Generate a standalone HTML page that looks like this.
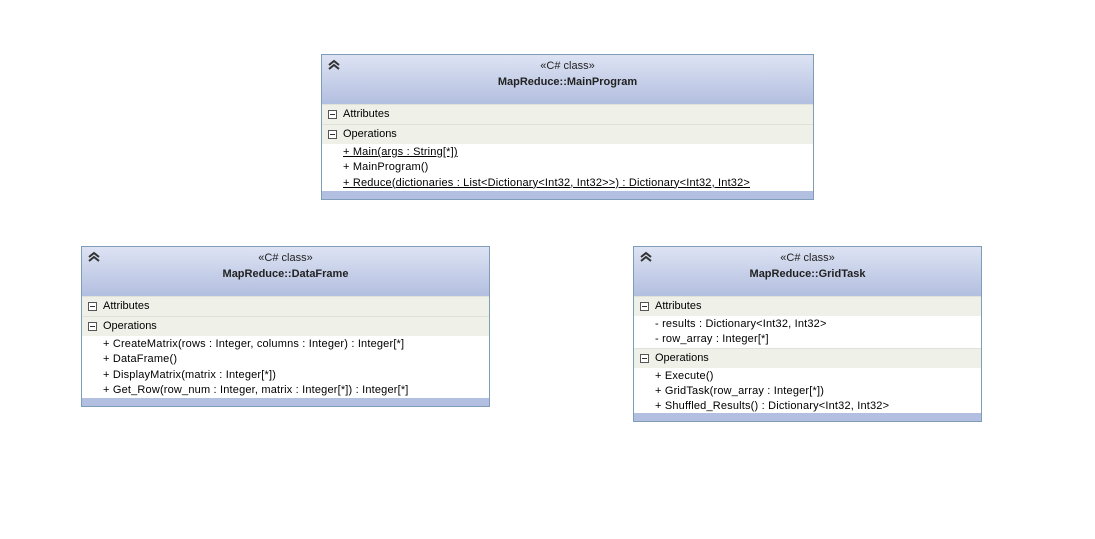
<!DOCTYPE html>
<html><head><style>
body{margin:0;width:1095px;height:539px;background:#fff;position:relative;font-family:"Liberation Sans",Tahoma,sans-serif;font-size:11px;color:#000;overflow:hidden}
.box{position:absolute;border:1px solid #7f9db9;background:#fff;box-sizing:border-box}
.hd{height:49px;background:linear-gradient(#dde3f3,#b3bfe0);position:relative;text-align:center}
.st{padding-top:4px;line-height:14px;color:#222}
.nm{font-weight:bold;line-height:14px;margin-top:2px;color:#222}
.chev{position:absolute;left:5px;top:4px}
.sec{height:19px;line-height:18px;background:#eff1e9;border-top:1px solid #dfe2d6;padding-left:21px;position:relative}
.sec:before{content:"";position:absolute;left:6px;top:5px;width:7px;height:7px;border:1px solid #555;background:#fff}
.sec:after{content:"";position:absolute;left:8px;top:9px;width:5px;height:1px;background:#333}
.items{padding:1px 0 0 21px;letter-spacing:0.18px}
.it{height:15.3px;line-height:15px;white-space:nowrap}
.u{text-decoration:underline}
.ft{height:8px;background:#b3bfe0;position:absolute;left:0;right:0;bottom:0}
</style></head><body>

<div class="box" style="left:321px;top:54px;width:493px;height:146px">
<div class="hd"><svg class="chev" width="14" height="12" viewBox="0 0 14 12"><path d="M2 6L7 2L12 6M2 10L7 6L12 10" fill="none" stroke="#333" stroke-width="2"/></svg><div class="st">«C# class»</div><div class="nm">MapReduce::MainProgram</div></div>
<div class="sec">Attributes</div>
<div class="sec">Operations</div>
<div class="items">
<div class="it u">+ Main(args : String[*])</div>
<div class="it">+ MainProgram()</div>
<div class="it u">+ Reduce(dictionaries : List&lt;Dictionary&lt;Int32, Int32&gt;&gt;) : Dictionary&lt;Int32, Int32&gt;</div>
</div>
<div class="ft"></div>
</div>

<div class="box" style="left:81px;top:246px;width:409px;height:161px">
<div class="hd"><svg class="chev" width="14" height="12" viewBox="0 0 14 12"><path d="M2 6L7 2L12 6M2 10L7 6L12 10" fill="none" stroke="#333" stroke-width="2"/></svg><div class="st">«C# class»</div><div class="nm">MapReduce::DataFrame</div></div>
<div class="sec">Attributes</div>
<div class="sec">Operations</div>
<div class="items">
<div class="it">+ CreateMatrix(rows : Integer, columns : Integer) : Integer[*]</div>
<div class="it">+ DataFrame()</div>
<div class="it">+ DisplayMatrix(matrix : Integer[*])</div>
<div class="it">+ Get_Row(row_num : Integer, matrix : Integer[*]) : Integer[*]</div>
</div>
<div class="ft"></div>
</div>

<div class="box" style="left:633px;top:246px;width:349px;height:176px">
<div class="hd"><svg class="chev" width="14" height="12" viewBox="0 0 14 12"><path d="M2 6L7 2L12 6M2 10L7 6L12 10" fill="none" stroke="#333" stroke-width="2"/></svg><div class="st">«C# class»</div><div class="nm">MapReduce::GridTask</div></div>
<div class="sec">Attributes</div>
<div class="items">
<div class="it">- results : Dictionary&lt;Int32, Int32&gt;</div>
<div class="it">- row_array : Integer[*]</div>
</div>
<div class="sec">Operations</div>
<div class="items">
<div class="it">+ Execute()</div>
<div class="it">+ GridTask(row_array : Integer[*])</div>
<div class="it">+ Shuffled_Results() : Dictionary&lt;Int32, Int32&gt;</div>
</div>
<div class="ft"></div>
</div>
</body></html>
